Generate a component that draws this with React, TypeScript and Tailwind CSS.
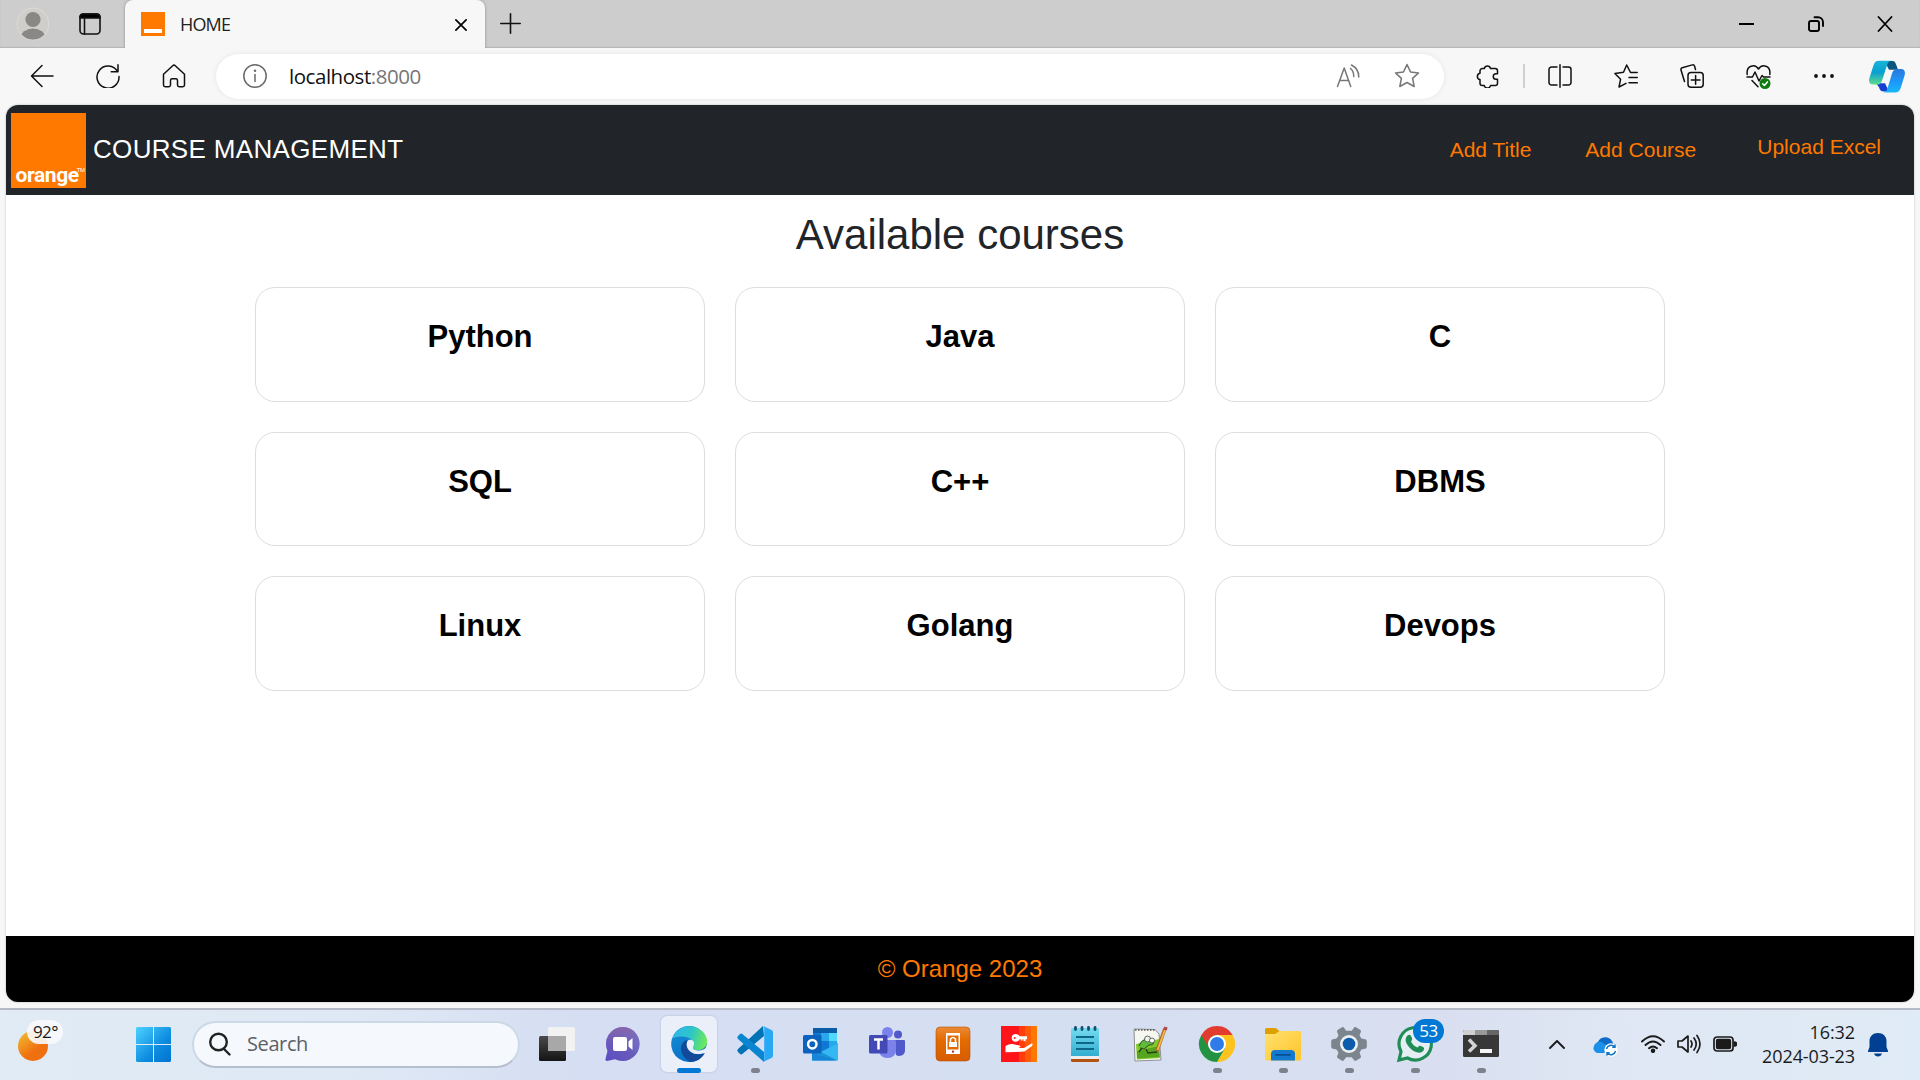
import React from "react";

type Kids = { children: React.ReactNode };

function Line({ w = 24, h = 24, sw = 1.5, color = "#111", children }: Kids & { w?: number; h?: number; sw?: number; color?: string }) {
  return (
    <svg width={w} height={h} viewBox={`0 0 ${w} ${h}`} fill="none" stroke={color} strokeWidth={sw} strokeLinecap="round" strokeLinejoin="round" className="shrink-0">
      {children}
    </svg>
  );
}

function TitleBar() {
  return (
    <div className="flex h-12 bg-[#cdcdcd] shadow-[inset_0_-1px_1px_#b5b5b5]">
      <div className="flex w-[125px] items-center pl-4">
        <svg width="34" height="34" viewBox="0 0 34 34">
          <defs><clipPath id="avatar"><circle cx="17" cy="17" r="15.5" /></clipPath></defs>
          <circle cx="17" cy="17" r="16" fill="#d0cecb" stroke="#dedcd8" strokeWidth="1" />
          <g fill="#8a8886" clipPath="url(#avatar)"><circle cx="17" cy="12.5" r="7.6" /><ellipse cx="17" cy="31" rx="12.5" ry="9.5" /></g>
        </svg>
        <div className="ml-[29px]">
          <Line w={22} h={22} sw={1.6}>
            <rect x="1" y="1" width="20" height="20" rx="3.5" />
            <path d="M1 5V4a3 3 0 0 1 3-3h14a3 3 0 0 1 3 3v1z" fill="#000" />
            <path d="M5.5 6v15" />
          </Line>
        </div>
      </div>
      <div className="flex w-[360px] items-center rounded-t-lg bg-[#f7f7f7] pl-4 shadow-[0_0_3px_#8a8a8a] [clip-path:inset(0_-4px_0_-4px)]">
        <div className="flex h-6 w-6 items-end justify-center bg-[#ff7900] pb-[3px]"><div className="h-[4px] w-[18px] bg-white" /></div>
        <span className="ml-[15px] w-[275px] font-['Open_Sans',sans-serif] text-[18px] leading-6 tracking-[-0.85px] text-[#222]">HOME</span>
        <div className="mt-[2px]"><Line w={12} h={12} sw={1.7} color="#000"><path d="M.9.9l10.2 10.2M11.1.9.9 11.1" /></Line></div>
      </div>
      <div className="flex flex-1 items-center pl-[15px]">
        <div className="mb-[1px]"><Line w={21} h={21} sw={1.6}><path d="M10.5.8v19.4M.8 10.5h19.4" /></Line></div>
      </div>
      <div className="mr-px flex w-[207px] items-center">
        <div className="flex w-[69px] justify-center"><div className="h-[2px] w-[15px] bg-black" /></div>
        <div className="flex w-[69px] justify-center"><Line w={16} h={16} sw={1.9} color="#000"><rect x="1" y="5" width="10" height="10" rx="2" /><path d="M6.5 1.2H10a5 5 0 0 1 5 5V10" /></Line></div>
        <div className="flex w-[69px] justify-center"><Line w={16} h={16} sw={1.8} color="#000"><path d="M1.500 1l13 14M14.500 1l-13 14" /></Line></div>
      </div>
    </div>
  );
}

function Cell({ children }: Kids) {
  return <div className="flex w-[66px] shrink-0 justify-center">{children}</div>;
}

function Copilot() {
  return (
    <svg width="36" height="33" viewBox="0 0 36 34" preserveAspectRatio="none">
      <defs>
        <linearGradient id="cpA" x1="0" y1="0" x2="0" y2="1"><stop offset="0" stopColor="#16b5d8" /><stop offset=".5" stopColor="#0aa0d0" /><stop offset="1" stopColor="#5fdc8b" /></linearGradient>
        <linearGradient id="cpB" x1="0" y1="0" x2="0" y2="1"><stop offset="0" stopColor="#2a78dc" /><stop offset=".6" stopColor="#1b9bfb" /><stop offset="1" stopColor="#18b8fa" /></linearGradient>
      </defs>
      <path d="M17 1h6c3 0 3.600 2 4.400 4.500L29 10h-9l-3-6z" fill="#0a567f" />
      <path d="M7 24h9l4 8.500H15c-3 0-4-1.500-5-4.500z" fill="#153fd0" />
      <path d="M10 .8h13c-3 0-4 1.500-5 4.500l-5 16c-1 3-2.500 4-5 4H4c-4 0-4.500-3.500-3.500-7l4-13C5.500 2.300 7 .8 10 .8z" fill="url(#cpA)" />
      <path d="M28 9.300h4c4 0 4.500 3.500 3.500 7l-3.800 12.500C30.700 32 29 33.500 26 33.500H13.500c3 0 4-1.500 5-4.500l4.500-15c1-3 2.500-4.700 5-4.700z" fill="url(#cpB)" />
    </svg>
  );
}

function Toolbar() {
  return (
    <div className="flex h-[57px] items-center bg-[#f7f7f7] pb-px pl-[9px]">
      <Cell><Line><path d="M23 12H1.500M12 1.500 1.500 12 12 22.500" /></Line></Cell>
      <Cell><Line><path d="M21.500 7.500A11 11 0 1 0 23 12.500M22 .8v6.900h-6.800" /></Line></Cell>
      <Cell><Line><path d="M1.500 10.300 10.700 1.700a2 2 0 0 1 2.600 0l9.200 8.600v10.700a1.700 1.700 0 0 1-1.700 1.700h-3.600a1.700 1.700 0 0 1-1.700-1.700v-4.500a1.700 1.700 0 0 0-1.700-1.700h-3.600a1.700 1.700 0 0 0-1.700 1.700V21a1.700 1.700 0 0 1-1.700 1.700H3.200A1.700 1.700 0 0 1 1.500 21z" /></Line></Cell>
      <div className="ml-[9px] flex h-[45px] w-[1228px] shrink-0 items-center rounded-full bg-white pl-[27px] shadow-[0_0_5px_#e4e4e4]">
        <Line color="#6a6a6a"><circle cx="12" cy="12" r="11.200" /><path d="M12 10.500v7" /><circle cx="12" cy="6.700" r=".5" fill="#6a6a6a" /></Line>
        <span className="ml-[22px] flex-1 font-['Open_Sans',sans-serif] text-[20.500px] leading-6 tracking-[-0.46px] text-[#111]">localhost<span className="text-[#767676]">:8000</span></span>
        <Line color="#777"><path d="M1.500 22.500 8.200 4l6.500 18.500M4 16.500h8.800M14.500 4.500q3.500 3 3.200 8M15.500 1q7.500 4 7.200 12" /></Line>
        <div className="ml-[34px] mr-[24px]"><Line w={26} h={26} color="#777"><path d="M13 1.500l3.500 7.400 8 1-5.900 5.500 1.600 8.100L13 19.500l-7.200 4 1.600-8.100L1.500 9.900l8-1z" /></Line></div>
      </div>
      <div className="w-[11px]" />
      <Cell><Line><path d="M8.300 4.500a3.200 3.200 0 0 1 6.200 0h4.700a2.300 2.300 0 0 1 2.300 2.300v3h-1.500a2.700 2.700 0 0 0 0 5.500h1.500v4a2.300 2.300 0 0 1-2.300 2.300h-4.700a3.200 3.200 0 0 1-6.200 0H6.300A2.300 2.300 0 0 1 4 19.300v-3.700a3.200 3.200 0 0 1 0-6.300V6.800a2.300 2.300 0 0 1 2.300-2.300z" /></Line></Cell>
      <div className="ml-[2px] h-6 w-[2px] bg-[#d0d0d0]" />
      <div className="w-[2px]" />
      <Cell><Line><path d="M9 3H3.500A2.500 2.500 0 0 0 1 5.500v13A2.500 2.500 0 0 0 3.500 21H9M15 3h5.500A2.500 2.500 0 0 1 23 5.500v13a2.500 2.500 0 0 1-2.500 2.500H15M12 .8v22.400" /></Line></Cell>
      <Cell><Line><path d="M23.200 8.500h-6.700L12.700 1 9.500 8.200.9 9.500l5.700 5.700L5 23l7-3.700M15 13.500h8.300M15 18.800h8.300" /></Line></Cell>
      <Cell><Line><path d="M15.500 5.500 14.500 2A1.800 1.800 0 0 0 12.300.9L2.200 3.700A1.800 1.800 0 0 0 1 6l3.500 11.500" /><rect x="8" y="8.500" width="15.200" height="14.700" rx="3" /><path d="M15.600 11.500v8.700M11.300 15.900h8.700" /></Line></Cell>
      <Cell>
        <Line w={25} h={25}><path d="M1.200 10.500C0 1.500 9-.5 12.500 5 16-.5 25 1.500 23.800 10.500M1 13h5.500L9 8l4 9 3-5.500 1.500 1.500H24M6 16.500l6 6.300" /><circle cx="19" cy="19.500" r="5.500" fill="#107c10" stroke="none" /><path d="M16.700 19.700l1.700 1.700 3-3.500" stroke="#fff" /></Line>
      </Cell>
      <Cell><Line><g fill="#111" stroke="none"><circle cx="4" cy="12" r="1.900" /><circle cx="12" cy="12" r="1.900" /><circle cx="20" cy="12" r="1.900" /></g></Line></Cell>
      <div className="flex w-[60px] justify-center"><Copilot /></div>
    </div>
  );
}

const courses = ["Python", "Java", "C", "SQL", "C++", "DBMS", "Linux", "Golang", "Devops"];

function Page() {
  return (
    <div className="mx-[6px] flex h-[897px] flex-col overflow-hidden rounded-xl bg-white font-['Liberation_Sans',Arial,sans-serif] shadow-[0_0_2px_#aaa]">
      <nav className="flex h-[90px] shrink-0 items-start bg-[#212529] text-[21px] leading-[30px] text-[#ff7900]">
        <div className="ml-[5px] mt-2 flex h-[75px] w-[75px] items-end justify-center bg-[#ff7900] text-white">
          <span className="ml-[3px] font-[Roboto,sans-serif] text-[21px] font-bold leading-[26px] tracking-[-0.4px]">orange</span>
          <span className="mb-[14px] -ml-[2px] text-[6px] leading-[8px] tracking-[-0.5px]">TM</span>
        </div>
        <span className="ml-[7px] mt-[28px] flex-1 text-[26px] leading-[32px] tracking-[0.33px] text-white">COURSE MANAGEMENT</span>
        <a className="mt-[30px]">Add Title</a>
        <a className="ml-[54px] mt-[30px]">Add Course</a>
        <a className="ml-[61px] mr-[33px] mt-[27px]">Upload Excel</a>
      </nav>
      <main className="flex flex-1 flex-col items-center">
        <h1 className="mt-[14px] text-[42px] leading-[52px] text-[#212529]">Available courses</h1>
        <div className="mt-[26px] grid grid-cols-3 gap-x-[30px] gap-y-[30px]">
          {courses.map((c) => (
            <div key={c} className="flex h-[114.500px] w-[450px] justify-center rounded-[20px] border border-[#dddddd] pt-[30px] text-[31px] font-bold leading-[38px] text-black">{c}</div>
          ))}
        </div>
      </main>
      <footer className="flex h-[66px] shrink-0 items-center justify-center bg-black text-[24px] text-[#ff7900]">© Orange 2023</footer>
    </div>
  );
}

function App36({ children }: Kids) {
  return <svg width="36" height="36" viewBox="0 0 36 36" className="overflow-visible">{children}</svg>;
}

const icons: { id: string; state?: "open" | "active"; art: React.ReactNode }[] = [
  { id: "tasks", art: <App36><defs><linearGradient id="tv" x1="0" y1="0" x2="0" y2="1"><stop stopColor="#4a4a4a" /><stop offset="1" stopColor="#141414" /></linearGradient></defs><rect y="10" width="27" height="25" rx="1.500" fill="url(#tv)" /><rect x="9" y="1" width="27" height="24" rx="1.500" fill="#f2f2f2" /><path d="M9 10h18v15H10.500A1.500 1.500 0 0 1 9 23.500z" fill="#a8a8a8" /></App36> },
  { id: "chat", art: <App36><defs><linearGradient id="ch" x1="0" y1="1" x2="1" y2="0"><stop stopColor="#5b4cc4" /><stop offset=".5" stopColor="#6a5cb8" /><stop offset="1" stopColor="#7f9cf0" /></linearGradient><linearGradient id="ch2" x1="0" y1="0" x2="0" y2="1"><stop stopColor="#8a64a8" /><stop offset="1" stopColor="#5455c9" stopOpacity="0" /></linearGradient></defs><path d="M18 1a17 17 0 1 1-8 32.200L2 35q-2 0-1.500-2L2.500 25A17 17 0 0 1 18 1z" fill="url(#ch)" /><path d="M18 1a17 17 0 1 1-8 32.200L2 35q-2 0-1.500-2L2.500 25A17 17 0 0 1 18 1z" fill="url(#ch2)" /><rect x="8" y="11" width="14" height="14" rx="2" fill="#fff" /><path d="M23.500 15.500l4-3.500v12l-4-3.500z" fill="#fff" /></App36> },
  { id: "edge", state: "active", art: <App36><defs><linearGradient id="eg" x1="0" y1=".2" x2="1" y2=".4"><stop stopColor="#2fb5ef" /><stop offset=".55" stopColor="#2dc6c6" /><stop offset="1" stopColor="#6cea5a" /></linearGradient><linearGradient id="eb" x1="0" y1="0" x2=".3" y2="1"><stop stopColor="#1790d4" /><stop offset="1" stopColor="#0a72c8" /></linearGradient></defs><path d="M18 0a18 18 0 1 0 14 29.500L36 18A18 18 0 0 0 18 0z" fill="url(#eb)" /><path d="M1 13C5 2 16-2 25 1.500c8 3 12 10 11 15.500-1 6-8 8.500-13 6.500-3-1.200-1-2.500-.5-4.500C23 14.500 19 12 15 11 9 9.500 3 11 1 13z" fill="url(#eg)" /><path d="M15 14c-8 5-6 16 4 21.900 6 .5 12-3.400 15-8.900-7 3.500-16 .5-17-6-.4-3 0-5-2-7z" fill="#114a9a" /><path d="M17.500 14c4-1.500 7 2 5 6-1 2-1.500 3.500 3 4.300 4 .7 8-.5 10.500-3.300L34 26.500c-7 3.300-15.500 1.500-18-5.500-.7-2.500-.5-5.500 1.500-7z" fill="#e9f0fb" /></App36> },
  { id: "code", state: "open", art: <App36><path d="M26 0 1 23q-1.500 1.500 0 3l2 2q1 .8 2.300 0L27 10z" fill="#0073b7" /><path d="M27 36 1 13q-1.500-1.500 0-3l2-2q1-.8 2.300 0L27 26z" fill="#0a86d1" /><path d="M26 0l8.500 4Q36 5 36 6v24q0 1-1.500 2L26 36l1.200-2V2z" fill="#28a8f5" /></App36> },
  { id: "outlook", art: <App36><rect x="10" y="2" width="24" height="26" rx="1.500" fill="#0f78d4" /><path d="M10 2h24v5H10z" fill="#0a5ca8" /><path d="M18 7h8v8h-8zM26 15h8v7h-8z" fill="#28a8ea" /><path d="M26 7h8v8h-8z" fill="#50d9ff" /><path d="M35 17v16a1.500 1.500 0 0 1-1.500 1.500H9V20l11 5z" fill="#1b93dc" /><path d="M35 17 18 26l16 8.300q1-.3 1-1.300z" fill="#35b8f1" /><path d="M9 27l24.500 7.500H10q-1 0-1-1z" fill="#1685d8" /><rect y="9" width="18.500" height="18.500" rx="1.500" fill="#0b63bd" /><circle cx="9.300" cy="18.200" r="4.200" fill="none" stroke="#fff" strokeWidth="2.500" /></App36> },
  { id: "teams", art: <App36><circle cx="29" cy="8.500" r="4" fill="#5059c9" /><path d="M25 14h10q1 0 1 1v9c0 6-6 7-9 5z" fill="#5059c9" /><circle cx="18.500" cy="6.500" r="5.500" fill="#7b83eb" /><path d="M10 14h15.500q1.500 0 1.500 1.500V26a9 9 0 0 1-17 0z" fill="#7b83eb" /><rect y="9" width="18.500" height="18.500" rx="1.500" fill="#4349b5" /><path d="M5 13.500h9M9.500 14v9.500" stroke="#fff" strokeWidth="2.500" /></App36> },
  { id: "phone", art: <App36><defs><linearGradient id="ph" x1="0" y1="0" x2="0" y2="1"><stop stopColor="#ea8a35" /><stop offset=".4" stopColor="#e46a00" /><stop offset="1" stopColor="#d65c00" /></linearGradient></defs><rect x="1" y="1" width="34" height="34" rx="4" fill="url(#ph)" stroke="#bb5204" strokeWidth=".6" /><rect x="11" y="7" width="14" height="21" fill="#fff" /><path d="M12.500 9.500h11v14h-11z" fill="#e46a00" /><path d="M14 16h8v5h-8z" fill="#fff" /><path d="M15.500 16v-3q2.500-3 5 0v3" fill="none" stroke="#fff" strokeWidth="1.500" /><circle cx="18" cy="25.700" r="1.100" fill="#a22" /></App36> },
  { id: "key", art: <App36><path d="M0 0h36v36H0z" fill="#ff1419" /><path d="M18 0h18v36H18z" fill="#ff3c0a" /><path d="M24 0h12v36H24z" fill="#ff5b08" /><path d="M30 0h6v36h-6z" fill="#ff7900" /><path fillRule="evenodd" d="M14.500 8c2 0 3.300.8 4 2.200H26v3h-1.500v2h-2v-2h-1v1.300h-1.700v-1.300h-1.300C17.800 14.900 16.500 15.700 14.500 15.700c-2.200 0-3.800-1.600-3.800-3.800S12.300 8 14.500 8zm-.8 3a1 1 0 1 0 0 2 1 1 0 0 0 0-2z" fill="#fff" /><path d="M4.500 20q4-2.500 7-2l7 1.500q2 1.500-1 2.500h5.500l7.500-4.500q2-.5.500 2.500l-7.500 5.500-9 .5-10 .3z" fill="#fff" /></App36> },
  { id: "notepad", art: <App36><defs><linearGradient id="np" x1="0" y1="0" x2="0" y2="1"><stop stopColor="#74dbf0" /><stop offset="1" stopColor="#34aed0" /></linearGradient></defs><path d="M4 30h28v4.500q0 1.500-1.500 1.500h-25Q4 36 4 34.500z" fill="#b4520f" /><path d="M4 29h28v4H4z" fill="#eee" /><path d="M5.500 2h25Q32 2 32 3.500V30H4V3.500Q4 2 5.500 2z" fill="url(#np)" /><path d="M9 11h18M9 17h18M9 23h18" stroke="#0b6688" strokeWidth="1.800" /><path d="M8.500 1.500v2M15 1.500v2M21.500 1.500v2M28 1.500v2" stroke="#12506e" strokeWidth="2.800" strokeLinecap="round" /></App36> },
  { id: "npp", art: <App36><path d="M1 3l21 .5 4 4.500 2 26-26 1z" fill="#f7f7f2" stroke="#777" strokeWidth=".8" /><path d="M3 18l23-5 1 19-23 1.500z" fill="#84c92a" /><path d="M4 25l22-5 .5 11L4 32.500z" fill="#56a51f" /><path d="M6 20q3-8 9-6l5 1q2 4-4 4l-5 4-4-1" fill="#5fbb3c" stroke="#28501f" strokeWidth="1" /><circle cx="14.500" cy="13" r="3" fill="#e9f5e1" stroke="#444" strokeWidth=".8" /><circle cx="19" cy="14.500" r="2.500" fill="#fff" stroke="#444" strokeWidth=".8" /><path d="M9 22l-3 4M13 23l2 4 9-1" stroke="#263d19" strokeWidth="1.300" fill="none" /><path d="M2 4h20" stroke="#555" strokeWidth="1.500" strokeDasharray="1.500 1.500" /><path d="M32 2.500 24 25" stroke="#a96a25" strokeWidth="3.600" /><path d="M32 4 24.500 24" stroke="#f2b64c" strokeWidth="2" /><path d="M33 1l-1 3" stroke="#b0484c" strokeWidth="3.500" /></App36> },
  { id: "chrome", state: "open", art: <App36><path d="M18 9h15.600A18 18 0 0 1 18 36l7.800-13.500z" fill="#fcc31e" /><path d="M2.400 9A18 18 0 0 0 18 36l7.800-13.500L18 18V9z" fill="#229342" /><path d="M2.400 9A18 18 0 0 1 33.600 9H18a9 9 0 0 0-7.800 13.500z" fill="#e33b2e" /><circle cx="18" cy="18" r="9" fill="#fff" /><circle cx="18" cy="18" r="7" fill="#2f7bea" /></App36> },
  { id: "files", state: "open", art: <App36><defs><linearGradient id="fo" x1="0" y1="0" x2="1" y2="1"><stop stopColor="#ffe16f" /><stop offset="1" stopColor="#ffc42a" /></linearGradient></defs><path d="M0 3.500Q0 2 1.500 2H10q1 0 2 1l3 2.500V12H0z" fill="#dda000" /><path d="M0 8h10l4.500-3H34.500Q36 5 36 6.500V33q0 1.500-1.500 1.500h-33Q0 34.500 0 33z" fill="url(#fo)" /><path d="M6 34.500V28q0-4 4-4h16q4 0 4 4v6.500z" fill="#1379ce" /><path d="M11 28.800h14" stroke="#064f94" strokeWidth="1.700" strokeLinecap="round" /></App36> },
  { id: "settings", state: "open", art: <App36><path d="M12.500 1 11 1.200 6.500 4l-.5 1.500L7.500 9.500 5.500 12.500 1 13.500.2 15v6l.8 1.500 4.500 1 2 3L6 30.500l.5 1.500L11 34.800h1.500l2.700-3.600h5.600l2.700 3.600H25l4.500-2.800.5-1.500-1.500-4 2-3 4.500-1 .8-1.500v-6l-.8-1.500-4.500-1-2-3L30 5.500 29.500 4 25 1.200 23.500 1l-2.700 3.800h-5.600z" fill="#7b858d" /><circle cx="18" cy="18" r="9" fill="#eceff2" /><circle cx="18" cy="18" r="6.300" fill="#0b5cad" /></App36> },
  { id: "whatsapp", state: "open", art: <App36><path d="M2 34l2-8.500A16.200 16.200 0 1 1 10.500 32z" fill="#e5eef2" stroke="#1f8d55" strokeWidth="3.200" /><path d="M10.500 9.500c2-1.500 3-1 4 1.500.8 2 1 2.500-.5 4.500 1.500 3 3.500 5 6.500 6 2-2.500 2.500-2 4.500-1 2.500 1 2.500 2 1.500 4-3 4-9 2-13-2s-7-9-3-13z" fill="#1f8d55" /></App36> },
  { id: "terminal", state: "open", art: <App36><rect y="4" width="36" height="27" rx="1.500" fill="#373737" /><path d="M0 9V5.500Q0 4 1.500 4H12v5z" fill="#cfcfcf" /><path d="M12 4h12v5H12z" fill="#999" /><path d="M24 4h10.500Q36 4 36 5.500V9H24z" fill="#666" /><path d="M6 13.500l6 6.200-6 5.800" fill="none" stroke="#d4d4d4" strokeWidth="3.500" /><path d="M17 23h12v4H17z" fill="#f5f5f5" /></App36> },
];

function Taskbar() {
  return (
    <div className="flex h-[72px] items-center border-t-2 border-[#b4bac6] bg-[linear-gradient(90deg,#e0ebf5_0%,#dfe9f5_18%,#d5def2_30%,#d5dff2_55%,#d9dff0_75%,#dfe8f4_85%,#dfebf6_100%)] pb-[2px] font-['Open_Sans',sans-serif] text-[#1b1b1b]">
      <div className="relative mb-[6px] ml-[18px] h-[42px] w-[46px]">
        <svg width="30" height="30" viewBox="0 0 30 30" className="mt-[11px]"><defs><linearGradient id="sun" x1="0" y1="0" x2=".7" y2="1"><stop stopColor="#f0c435" /><stop offset=".7" stopColor="#f07010" /></linearGradient></defs><circle cx="15" cy="15" r="15" fill="url(#sun)" /></svg>
        <span className="absolute left-[9px] top-0 h-6 w-9 rounded-full bg-[#f8fafd]/90 pl-[6px] text-[17px] leading-[24px] tracking-[-0.6px]">92°</span>
      </div>
      <svg width="35" height="35" viewBox="0 0 35 35" className="ml-[72px]"><defs><linearGradient id="win" x1="0" y1="0" x2="1" y2="1"><stop stopColor="#4cd2ff" /><stop offset=".6" stopColor="#0e8ce0" /><stop offset="1" stopColor="#0073d0" /></linearGradient></defs><path d="M1 0h16v17H0V1zM18 0h16l1 1v16H18zM0 18h17v17H1l-1-1zM18 18h17v16l-1 1H18z" fill="url(#win)" /></svg>
      <div className="ml-[21px] flex h-[47px] w-[328px] items-center rounded-full border-2 border-[#cdd8e6] border-b-[#b5bfd0] bg-[#f5f8fd] pl-[15px]">
        <Line w={22} h={24} sw={2.4} color="#222"><circle cx="9.500" cy="10" r="8.300" /><path d="M15 17l5.500 5.500" /></Line>
        <span className="ml-4 text-[20px] tracking-[-0.4px] text-[#5d6065]">Search</span>
      </div>
      <div className="ml-1 flex">
        {icons.map((i) => (
          <div key={i.id} className="flex w-[66px] justify-center">
            <div className={i.state === "active" ? "relative flex h-14 w-14 items-center justify-center rounded-md bg-[#eaeffa] shadow-[0_0_2px_#aab4cc]" : "relative flex h-14 w-14 items-center justify-center"}>
              {i.art}
              {i.state === "open" && <span className="absolute -bottom-px h-[5px] w-[9px] rounded-full bg-[#7d828d]" />}
              {i.state === "active" && <span className="absolute -bottom-px h-[5px] w-6 rounded-full bg-[#0078d4]" />}
              {i.id === "whatsapp" && <span className="absolute left-[26px] top-[3px] flex h-6 w-[31px] items-center justify-center rounded-full bg-[#0078d4] text-[17px] tracking-[-0.5px] text-white">53</span>}
            </div>
          </div>
        ))}
      </div>
      <div className="ml-[35px]"><Line w={16} h={9} sw={1.900} color="#1b1b1b"><path d="M1 8l7-7 7 7" /></Line></div>
      <svg width="25" height="22" viewBox="0 0 25 22" className="ml-[28px] mt-[3px]"><path d="M5 16a5 5 0 0 1 0-9A8 8 0 0 1 19 6l2 4-5 6z" fill="#0d6cc8" /><path d="M2 9q4-4 8-1l9 6-4 4H4q-6-3-2-9z" fill="#1a90e8" /><circle cx="18" cy="15" r="6.700" fill="#fff" /><path d="M13.500 14a4.700 4.700 0 0 1 8-2.300M22.500 16a4.700 4.700 0 0 1-8 2.300M22 9.500v2.700h-2.700M14 20.500v-2.700h2.700" fill="none" stroke="#1272c4" strokeWidth="1.500" /></svg>
      <div className="ml-[23px]"><Line w={24} h={18} sw={1.900} color="#1b1b1b"><path d="M1 6.500q11-10.500 22 0M4.500 10q7.500-7 15 0M8 13.200q4-3.600 8 0" /><circle cx="12" cy="15.800" r="1.300" fill="#1b1b1b" /></Line></div>
      <div className="ml-3"><Line w={24} h={20} sw={1.700} color="#1b1b1b"><path d="M1 7v6h4l6 5V2L5 7zM14 7q2 3 0 6M17 4q4.500 6 0 12M20 1.500q6 8.500 0 17" /></Line></div>
      <div className="ml-3"><Line w={24} h={16} sw={1.700} color="#1b1b1b"><rect x="1" y="1" width="19" height="14" rx="3" /><rect x="3.700" y="3.700" width="13.600" height="8.600" rx="1" fill="#1b1b1b" /><path d="M21.500 6v4q2-.5 2-2t-2-2z" fill="#1b1b1b" /></Line></div>
      <div className="mb-px ml-[16px] w-[102px] text-right text-[18px] leading-6 tracking-[-0.1px]">16:32<br />2024-03-23</div>
      <svg width="20" height="24" viewBox="0 0 20 24" className="ml-[13px] mt-[2px]"><path d="M10 0c5 0 8.500 3.500 8.500 8v6l1.500 4v1H0v-1l1.500-4V8C1.500 3.500 5 0 10 0zM6 20.500h8q-1 3-4 3t-4-3z" fill="#003f91" /></svg>
    </div>
  );
}

export default function App() {
  return (
    <div className="h-[1080px] w-[1920px] overflow-hidden bg-[#f7f7f7]">
      <TitleBar />
      <Toolbar />
      <Page />
      <div className="h-[6px]" />
      <Taskbar />
    </div>
  );
}
